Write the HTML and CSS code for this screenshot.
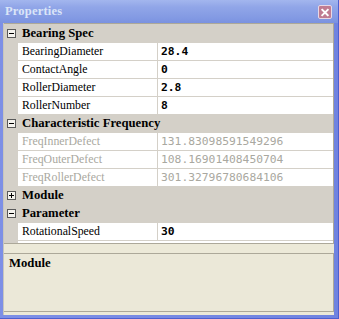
FILE: index.html
```html
<!DOCTYPE html>
<html>
<head>
    <meta charset="UTF-8">
    <title>Properties</title>
    <link rel="stylesheet" href="styles.css">
</head>
<body>
    <div class="window">
        <!-- title bar -->
        <div class="titlebar">
            <span class="title">Properties</span>
            <span class="close">
                <svg width="13" height="13" viewBox="0 0 13 13">
                    <path d="M3.5 3.5 L9.5 9.5 M9.5 3.5 L3.5 9.5" stroke="#fff" stroke-width="2" stroke-linecap="square"/>
                </svg>
            </span>
        </div>

        <div class="panel">
            <!-- property grid -->
            <div class="grid">
                <div class="row cat"><span class="margin"><i class="box minus"></i></span><span class="catname">Bearing Spec</span></div>
                <div class="row"><span class="margin"></span><span class="name">BearingDiameter</span><span class="value">28.4</span></div>
                <div class="row"><span class="margin"></span><span class="name">ContactAngle</span><span class="value">0</span></div>
                <div class="row"><span class="margin"></span><span class="name">RollerDiameter</span><span class="value">2.8</span></div>
                <div class="row"><span class="margin"></span><span class="name">RollerNumber</span><span class="value">8</span></div>

                <div class="row cat"><span class="margin"><i class="box minus"></i></span><span class="catname">Characteristic Frequency</span></div>
                <div class="row ro"><span class="margin"></span><span class="name">FreqInnerDefect</span><span class="value">131.83098591549296</span></div>
                <div class="row ro"><span class="margin"></span><span class="name">FreqOuterDefect</span><span class="value">108.16901408450704</span></div>
                <div class="row ro"><span class="margin"></span><span class="name">FreqRollerDefect</span><span class="value">301.32796780684106</span></div>

                <div class="row cat"><span class="margin"><i class="box plus"></i></span><span class="catname">Module</span></div>

                <div class="row cat"><span class="margin"><i class="box minus"></i></span><span class="catname">Parameter</span></div>
                <div class="row"><span class="margin"></span><span class="name">RotationalSpeed</span><span class="value">30</span></div>
                <div class="filler"></div>
            </div>

            <!-- description area -->
            <div class="help">
                <div class="help-title">Module</div>
            </div>
        </div>
    </div>
</body>
</html>
```

FILE: styles.css
```css
* { margin: 0; padding: 0; box-sizing: border-box; }

body {
    width: 339px;
    height: 319px;
    overflow: hidden;
    background: #fff;
    font-family: "Liberation Serif", serif;
}

.window {
    width: 339px;
    height: 319px;
    display: flex;
    flex-direction: column;
    background: linear-gradient(to right, #7d8fe6, #6f83e0);
    border-right: 1px solid #4e5fcf;
    border-bottom: 1px solid #4e5fcf;
}

/* title bar */
.titlebar {
    height: 23px;
    flex-shrink: 0;
    display: flex;
    align-items: center;
    justify-content: space-between;
    padding: 0 5px 0 5px;
    background: linear-gradient(to bottom, #a3b6ee 0%, #91a6e8 30%, #8299e3 80%, #7b92e0 100%);
}

.title {
    color: #dbe5f8;
    font-weight: bold;
    font-size: 12.5px;
    letter-spacing: 0.2px;
}

.close {
    width: 14px;
    height: 14px;
    margin-top: 1px;
    margin-right: 1px;
    display: flex;
    align-items: center;
    justify-content: center;
    background: #c07c92;
    border: 1px solid #e8d8e6;
    border-radius: 2px;
}

.panel {
    flex: 1;
    display: flex;
    flex-direction: column;
    margin: 0 4px 3px 3px;
    background: #ece9d8;
    border-left: 1px solid #c8c6bc;
}

/* property grid */
.grid {
    height: 221px;
    display: flex;
    flex-direction: column;
    border-top: 1px solid #aca899;
    border-bottom: 1px solid #aca899;
    border-right: 1px solid #aca899;
    padding-top: 1px;
    background-color: #d4d0c8;
}

.row {
    height: 18px;
    flex-shrink: 0;
    display: flex;
    border-bottom: 1px solid #d4d0c8;
    font-size: 11.8px;
    line-height: 17px;
    background: #fff;
}

.margin {
    width: 14px;
    flex-shrink: 0;
    background: #d4d0c8;
    position: relative;
}

.name {
    width: 140px;
    flex-shrink: 0;
    padding-left: 4px;
    border-right: 1px solid #d4d0c8;
    color: #000;
    white-space: nowrap;
    overflow: hidden;
}

.value {
    flex: 1;
    padding-left: 3px;
    font-family: "DejaVu Sans Mono", monospace;
    font-weight: bold;
    font-size: 11.3px;
    color: #000;
}

.ro .name,
.ro .value {
    color: #a9a8a0;
}

.ro .value {
    font-weight: normal;
}

.cat {
    background: #d4d0c8;
}

.catname {
    padding-left: 4px;
    font-weight: bold;
    font-size: 12.7px;
    white-space: nowrap;
}

.box {
    position: absolute;
    left: 3px;
    top: 4px;
    width: 9px;
    height: 9px;
    border: 1px solid #5a5a5a;
    background: #f4f3ee;
}

.box::before {
    content: "";
    position: absolute;
    left: 1px;
    top: 3px;
    width: 5px;
    height: 1px;
    background: #000;
}

.plus::after {
    content: "";
    position: absolute;
    left: 3px;
    top: 1px;
    width: 1px;
    height: 5px;
    background: #000;
}

.filler {
    flex: 1;
    background: #fff;
    margin-left: 14px;
}

/* description area */
.help {
    margin-top: 9px;
    height: 59px;
    border-top: 1px solid #aca899;
    border-bottom: 1px solid #aca899;
    border-right: 1px solid #aca899;
    background: #ebe8d8;
    padding: 2px 5px;
}

.help-title {
    font-weight: bold;
    font-size: 12.7px;
}
```
